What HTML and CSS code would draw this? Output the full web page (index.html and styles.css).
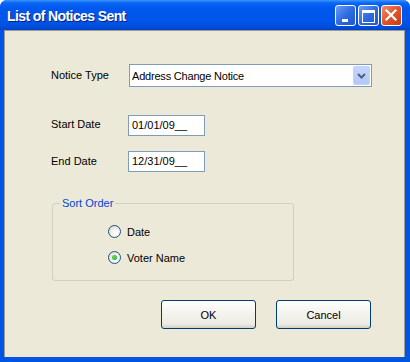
FILE: index.html
```html
<!DOCTYPE html>
<html lang="en">
<head>
  <meta charset="UTF-8" />
  <title>List of Notices Sent</title>
  <link rel="stylesheet" href="styles.css">
</head>
<body>
  <div class="window">
    <header class="titlebar">
      <span class="title">List of Notices Sent</span>
      <div class="controls">
        <span class="tb-btn">
          <svg width="19" height="19" viewBox="0 0 19 19"><rect x="6" y="13" width="6" height="3" fill="#fff"/></svg>
        </span>
        <span class="tb-btn">
          <svg width="19" height="19" viewBox="0 0 19 19"><rect x="3.5" y="5.5" width="12" height="11" fill="none" stroke="#fff"/><rect x="3" y="4" width="13" height="3" fill="#fff"/></svg>
        </span>
        <span class="tb-btn close">
          <svg width="19" height="19" viewBox="0 0 19 19"><path d="M4.5 4.5 L13.5 13.5 M13.5 4.5 L4.5 13.5" stroke="#fff" stroke-width="2.2" stroke-linecap="square"/></svg>
        </span>
      </div>
    </header>

    <main class="client">
      <div class="form">
        <label class="lbl">Notice Type</label>
        <div class="combo">
          <span class="combo-text">Address Change Notice</span>
          <span class="combo-arrow">
            <svg width="9" height="6" viewBox="0 0 9 6"><polyline points="1,1 4.5,4.5 8,1" fill="none" stroke="#4d6185" stroke-width="2"/></svg>
          </span>
        </div>

        <label class="lbl row-start">Start Date</label>
        <div class="field row-start">01/01/09__</div>

        <label class="lbl row-end">End Date</label>
        <div class="field row-end">12/31/09__</div>
      </div>

      <fieldset class="group">
        <legend>Sort Order</legend>
        <div class="radios">
          <div class="radio-row">
            <span class="radio"></span>
            <span>Date</span>
          </div>
          <div class="radio-row">
            <span class="radio checked"></span>
            <span>Voter Name</span>
          </div>
        </div>
      </fieldset>

      <div class="buttons">
        <button class="btn">OK</button>
        <button class="btn">Cancel</button>
      </div>
    </main>
  </div>
</body>
</html>
```

FILE: styles.css
```css
body {
  margin: 0;
  background: #fff;
  font-family: "Liberation Sans", Arial, sans-serif;
  font-size: 11px;
  color: #000;
}
.window {
  width: 410px;
  height: 362px;
  box-sizing: border-box;
  display: flex;
  flex-direction: column;
  background: #0054e3;
  border-radius: 7px 7px 0 0;
  padding: 0 5px 5px 4px;
}
.titlebar {
  height: 30px;
  margin: 0 -5px 0 -4px;
  padding: 0 8px 0 7px;
  display: flex;
  align-items: center;
  justify-content: space-between;
  border-radius: 7px 7px 0 0;
  background: linear-gradient(to bottom, #3d95ff 0px, #0a66f5 3px, #0058ee 8px, #0055ea 20px, #0150e0 26px, #0042c8 30px);
}
.title {
  color: #fff;
  font-weight: 700;
  font-size: 14px;
  letter-spacing: -0.6px;
  text-shadow: 1px 1px 0 #0a1e80;
  padding-top: 1px;
}
.controls {
  display: flex;
  gap: 2px;
  margin-top: 1px;
}
.tb-btn {
  width: 19px;
  height: 19px;
  border: 1px solid #fff;
  border-radius: 3px;
  background: linear-gradient(135deg, #6d9df6 0%, #2f6be3 50%, #1f56d0 100%);
  display: flex;
}
.tb-btn.close {
  background: linear-gradient(135deg, #f08a66 0%, #e2542a 50%, #c53c14 100%);
}

.client {
  flex: 1;
  background: #ece9d8;
  border: 1px solid #9b9a93;
  border-bottom: none;
  padding: 33px 33px 0 46px;
}
.form {
  display: grid;
  grid-template-columns: 77px auto;
  align-items: center;
}
.lbl {
  line-height: 13px;
}
.combo {
  margin-left: 1px;
  width: 239px;
  height: 19px;
  border: 1px solid #7f9db9;
  background: #fff;
  padding: 1px;
  display: flex;
  align-items: center;
  justify-content: space-between;
}
.combo-text {
  padding-left: 1px;
  letter-spacing: -0.2px;
}
.combo-arrow {
  width: 15px;
  height: 17px;
  border: 1px solid #c3d3fd;
  border-radius: 2px;
  background: linear-gradient(to bottom, #c6d6fc, #b4c8f6);
  display: flex;
  align-items: center;
  justify-content: center;
}
.field {
  width: 72px;
  height: 19px;
  border: 1px solid #7f9db9;
  background: #fff;
  padding-left: 3px;
  line-height: 19px;
}
.row-start {
  margin-top: 28px;
}
.lbl.row-start {
  margin-top: 26px;
}
.row-end {
  margin-top: 15px;
}
.lbl.row-end {
  margin-top: 14px;
}

.group {
  margin: 25px 0 0 1px;
  width: 242px;
  height: 84px;
  padding: 0;
  box-sizing: border-box;
  border: 1px solid #d0d0bf;
  border-radius: 3px;
}
.group legend {
  color: #0046d5;
  line-height: 13px;
  padding: 0 2px;
  margin-left: 7px;
}
.radios {
  padding: 15px 0 0 55px;
  display: flex;
  flex-direction: column;
  gap: 13px;
}
.radio-row {
  display: flex;
  align-items: center;
  gap: 6px;
  height: 13px;
}
.radio {
  width: 11px;
  height: 11px;
  border: 1px solid #1c5180;
  border-radius: 50%;
  background: radial-gradient(circle at 65% 65%, #fff 0%, #f4f3ee 40%, #d4d2c8 100%);
  position: relative;
}
.radio.checked::after {
  content: "";
  position: absolute;
  left: 3px;
  top: 3px;
  width: 5px;
  height: 5px;
  border-radius: 50%;
  background: radial-gradient(circle at 40% 40%, #5fe05f, #21a121);
}

.buttons {
  margin-top: 19px;
  display: flex;
  justify-content: flex-end;
  gap: 20px;
}
.btn {
  width: 95px;
  height: 29px;
  border: 1px solid #003c74;
  border-radius: 3px;
  background: linear-gradient(to bottom, #fff 0%, #f5f4ef 40%, #ecebe4 85%, #d6d0c5 100%);
  font-family: "Liberation Sans", Arial, sans-serif;
  font-size: 11px;
  color: #000;
  padding: 0;
}
```
